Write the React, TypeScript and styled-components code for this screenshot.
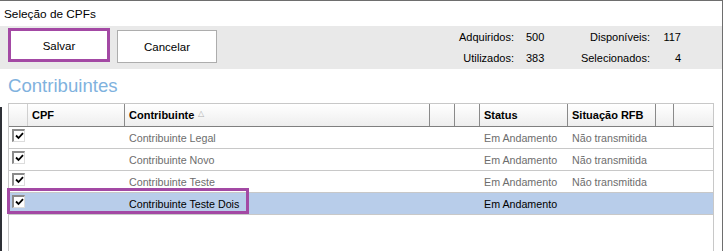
import React from "react";
import styled, { createGlobalStyle } from "styled-components";

const GlobalStyle = createGlobalStyle`
  html, body { margin: 0; padding: 0; background: #ffffff; }
  body { font-family: "Liberation Sans", Arial, sans-serif; }
`;

const Window = styled.div`
  position: relative;
  width: 723px;
  height: 251px;
  box-sizing: border-box;
  border-top: 1px solid #6e6e6e;
  border-right: 1px solid #6e6e6e;
  background: #ffffff;
  overflow: hidden;
  display: flex;
  flex-direction: column;
`;

const TitleBar = styled.div`
  flex: 0 0 25px;
  display: flex;
  align-items: center;
  padding-left: 4px;
  font-size: 11.8px;
  color: #000;
`;

const Toolbar = styled.div`
  flex: 0 0 41px;
  background: #e9e9e9;
  display: flex;
  align-items: flex-start;
  padding: 2px 0 0 8px;
  box-sizing: border-box;
  gap: 7px;
`;

const Button = styled.button<{ $highlight?: boolean }>`
  box-sizing: border-box;
  font-family: "Liberation Sans", Arial, sans-serif;
  font-size: 11.5px;
  color: #000;
  background: #ffffff;
  cursor: pointer;
  padding: 1px 0 0;
  width: ${(p) => (p.$highlight ? "102px" : "100px")};
  height: ${(p) => (p.$highlight ? "34px" : "33px")};
  margin-top: ${(p) => (p.$highlight ? "0" : "2px")};
  border: ${(p) => (p.$highlight ? "3px solid #a349a4" : "1px solid #adadad")};
`;

const Stats = styled.div`
  margin-left: auto;
  margin-right: 41px;
  display: grid;
  grid-template-columns: 70px 28px 84px 19px;
  grid-auto-rows: 21px;
  column-gap: 12px;
  margin-top: -1px;
  font-size: 11px;
  color: #000;
`;

const StatLabel = styled.span`
  text-align: right;
  line-height: 21px;
  white-space: nowrap;
`;

const StatValue = styled.span<{ $right?: boolean }>`
  text-align: ${(p) => (p.$right ? "right" : "left")};
  line-height: 21px;
`;

const Content = styled.div`
  position: relative;
  flex: 1 1 auto;
  min-height: 0;
  padding: 0 0 0 8px;
  &::before {
    content: "";
    position: absolute;
    left: 0;
    top: 38px;
    bottom: 0;
    width: 2px;
    background: #2e3036;
  }
`;

const Heading = styled.div`
  height: 34px;
  display: flex;
  align-items: center;
  padding-bottom: 1px;
  font-size: 18.6px;
  color: #7fb2de;
  box-sizing: border-box;
`;

const COLS = "19px 97px 305px 25px 25px 88px 88px 18px 41px";

const Table = styled.div`
  position: relative;
  width: 706px;
  height: 200px;
  box-sizing: border-box;
  border-left: 1px solid #c8c8c8;
  border-right: 1px solid #c8c8c8;
  border-top: 1px solid #c8c8c8;
`;

const HeaderRow = styled.div`
  display: grid;
  grid-template-columns: ${COLS};
  height: 22px;
  background: linear-gradient(#ffffff, #eeeeee);
  border-bottom: 1px solid #7f7f7f;
`;

const HeaderCell = styled.div<{ $light?: boolean }>`
  display: flex;
  align-items: center;
  padding-left: 4px;
  font-weight: bold;
  font-size: 11px;
  color: #000;
  border-right: 1px solid ${(p) => (p.$light ? "#d0d0d0" : "#8a8a8a")};
  overflow: hidden;
  white-space: nowrap;
  &:last-child { border-right: none; }
`;

const SortMark = styled.span`
  font-weight: normal;
  font-size: 8px;
  color: #b0b0b0;
  margin-left: 4px;
  margin-top: -3px;
`;

const Row = styled.div<{ $selected?: boolean }>`
  display: grid;
  grid-template-columns: ${COLS};
  height: 22px;
  box-sizing: border-box;
  border-bottom: 1px solid #c8c8c8;
  background: ${(p) => (p.$selected ? "#b8cdea" : "#ffffff")};
  color: ${(p) => (p.$selected ? "#000000" : "#6d6d6d")};
`;

const Cell = styled.div`
  display: flex;
  align-items: center;
  padding-left: 4px;
  font-size: 10.7px;
  white-space: nowrap;
  overflow: hidden;
`;

const CheckCell = styled.div`
  display: flex;
  align-items: flex-start;
  padding: 2px 0 0 3px;
`;

const CheckBox = styled.div`
  width: 13px;
  height: 13px;
  box-sizing: border-box;
  background: #ffffff;
  border-top: 2px solid #8a8a8a;
  border-left: 2px solid #8a8a8a;
  border-right: 1px solid #dcdcdc;
  border-bottom: 1px solid #dcdcdc;
  display: flex;
  align-items: center;
  justify-content: center;
`;

const Annotation = styled.div`
  position: absolute;
  left: -2px;
  top: 84px;
  width: 242px;
  height: 26px;
  box-sizing: border-box;
  border: 3px solid #a349a4;
  pointer-events: none;
`;

const Check = () => (
  <svg width="9" height="8" viewBox="0 0 9 8">
    <path d="M1 3.5 L3.5 6 L8 1.2" fill="none" stroke="#000" strokeWidth="1.8" />
  </svg>
);

type Item = { name: string; status: string; rfb: string; selected?: boolean };

const rows: Item[] = [
  { name: "Contribuinte Legal", status: "Em Andamento", rfb: "Não transmitida" },
  { name: "Contribuinte Novo", status: "Em Andamento", rfb: "Não transmitida" },
  { name: "Contribuinte Teste", status: "Em Andamento", rfb: "Não transmitida" },
  { name: "Contribuinte Teste Dois", status: "Em Andamento", rfb: "", selected: true },
];

export default function App() {
  return (
    <>
      <GlobalStyle />
      <Window>
        <TitleBar>Seleção de CPFs</TitleBar>
        <Toolbar>
          <Button $highlight>Salvar</Button>
          <Button>Cancelar</Button>
          <Stats>
            <StatLabel>Adquiridos:</StatLabel>
            <StatValue>500</StatValue>
            <StatLabel>Disponíveis:</StatLabel>
            <StatValue $right>117</StatValue>
            <StatLabel>Utilizados:</StatLabel>
            <StatValue>383</StatValue>
            <StatLabel>Selecionados:</StatLabel>
            <StatValue $right>4</StatValue>
          </Stats>
        </Toolbar>
        <Content>
          <Heading>Contribuintes</Heading>
          <Table>
            <HeaderRow>
              <HeaderCell $light />
              <HeaderCell>CPF</HeaderCell>
              <HeaderCell>
                Contribuinte<SortMark>△</SortMark>
              </HeaderCell>
              <HeaderCell />
              <HeaderCell />
              <HeaderCell>Status</HeaderCell>
              <HeaderCell>Situação RFB</HeaderCell>
              <HeaderCell />
              <HeaderCell />
            </HeaderRow>
            {rows.map((r) => (
              <Row key={r.name} $selected={r.selected}>
                <CheckCell>
                  <CheckBox>
                    <Check />
                  </CheckBox>
                </CheckCell>
                <Cell />
                <Cell>{r.name}</Cell>
                <Cell />
                <Cell />
                <Cell>{r.status}</Cell>
                <Cell>{r.rfb}</Cell>
                <Cell />
                <Cell />
              </Row>
            ))}
            <Annotation />
          </Table>
        </Content>
      </Window>
    </>
  );
}
